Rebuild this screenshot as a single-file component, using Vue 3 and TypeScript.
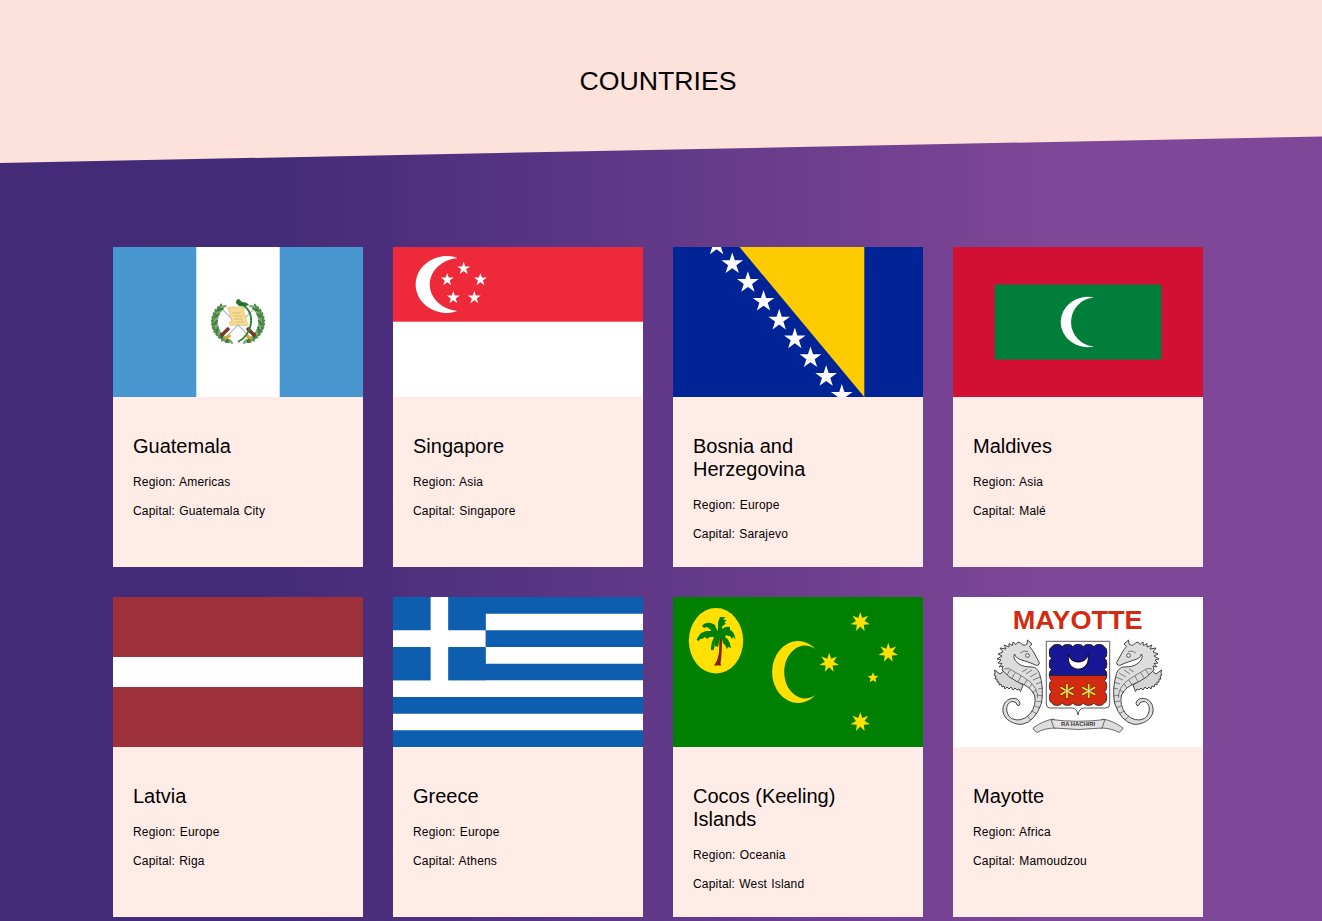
<script setup lang="ts">
interface Country {
  name: string
  region: string
  capital: string
  flag: string
}

const countries: Country[] = [
  { name: 'Guatemala', region: 'Americas', capital: 'Guatemala City', flag: 'gt' },
  { name: 'Singapore', region: 'Asia', capital: 'Singapore', flag: 'sg' },
  { name: 'Bosnia and Herzegovina', region: 'Europe', capital: 'Sarajevo', flag: 'ba' },
  { name: 'Maldives', region: 'Asia', capital: 'Malé', flag: 'mv' },
  { name: 'Latvia', region: 'Europe', capital: 'Riga', flag: 'lv' },
  { name: 'Greece', region: 'Europe', capital: 'Athens', flag: 'gr' },
  { name: 'Cocos (Keeling) Islands', region: 'Oceania', capital: 'West Island', flag: 'cc' },
  { name: 'Mayotte', region: 'Africa', capital: 'Mamoudzou', flag: 'yt' },
]

function star(cx: number, cy: number, r: number, points = 5, ratio = 0.382): string {
  const out: string[] = []
  for (let i = 0; i < points * 2; i++) {
    const rad = i % 2 ? r * ratio : r
    const a = (Math.PI * i) / points - Math.PI / 2
    out.push(`${(cx + rad * Math.cos(a)).toFixed(2)},${(cy + rad * Math.sin(a)).toFixed(2)}`)
  }
  return out.join(' ')
}

const sgStars = [[70.7, 21.5], [54.2, 32.7], [87.4, 32.7], [60.3, 50.7], [81.3, 50.7]]
const baStars = Array.from({ length: 9 }, (_, i) => [43.6 + i * 15.65, -2 + i * 18.8])
const ccStars = [[187.3, 25, 10], [215.3, 55.7, 10], [156.2, 65.7, 10], [187.3, 125, 10]]

// Laurel leaves, left branch; the right branch mirrors it
interface Leaf { x: number; y: number; a: number; c: string }
const leaves: Leaf[] = []
for (let i = 0; i < 13; i++) {
  const deg = 112 + i * 9.6
  const t = (deg * Math.PI) / 180
  const x = 125 + 23.5 * Math.cos(t)
  const y = 75 + 21 * Math.sin(t)
  leaves.push({ x: x - 1.5, y, a: deg + 60, c: '#4d8c46' })
  leaves.push({ x: x + 1.5, y, a: deg + 120, c: i % 2 ? '#3b7a35' : '#79a873' })
}

// Wavy outline of the Mayotte shield field
const top = 'M98.8 50' + 'a5.4 3.2 0 0 1 10.5 0'.repeat(5)
const scallops = top + 'a3 5.7 0 0 1 0 11.2'.repeat(5) + 'a5.4 3.2 0 0 1 -10.5 0'.repeat(5) + 'a3 5.7 0 0 1 0 -11.2'.repeat(5) + 'z'
const upperField = top + 'a3 5.7 0 0 1 0 11.2'.repeat(2) + 'q2.6 2.4 2.6 6.1H96.2q0-3.7 2.6-6.1' + 'a3 5.7 0 0 1 0 -11.2'.repeat(2) + 'z'
</script>

<template>
  <main class="page">
    <header class="hero">
      <svg class="slope" viewBox="0 0 1322 164" preserveAspectRatio="none" aria-hidden="true">
        <path d="M0 0H1322V136.5L0 163Z" fill="#fde2db" />
      </svg>
      <h1>COUNTRIES</h1>
    </header>
    <section class="grid">
      <article v-for="c in countries" :key="c.flag" class="card">
        <svg class="flag" viewBox="0 0 250 150" aria-hidden="true">
          <template v-if="c.flag === 'gt'">
            <rect width="250" height="150" fill="#4997d0" />
            <rect x="83.3" width="83.4" height="150" fill="#fff" />
            <path d="M107 60L142 95M143 60L108 95" stroke="#b4b8bc" stroke-width="1.1" />
            <g>
              <ellipse v-for="(l, i) in leaves" :key="i" rx="3.3" ry="1.3" :fill="l.c"
                :transform="`translate(${l.x} ${l.y}) rotate(${l.a})`" />
              <ellipse v-for="(l, i) in leaves" :key="'r' + i" rx="3.3" ry="1.3" :fill="l.c"
                :transform="`translate(${250 - l.x} ${l.y}) rotate(${-l.a})`" />
            </g>
            <path d="M108 89l8-8M142 89l-8-8" stroke="#7a3528" stroke-width="3.4" />
            <path d="M112 91q3 0 5-3M138 91q-3 0-5-3" fill="none" stroke="#e2a126" stroke-width="3" />
            <path d="M125 56C135 59 139 67 138 76C137 84 132 91 125 95" fill="none" stroke="#2f8736" stroke-width="2" />
            <path d="M123 56q0-4 3-4l3 3q5 0 7 3q-6 2-10 1z" fill="#25742d" />
            <path d="M114.5 60.5q8-1 15.5 0q2 1 .5 3l3.5 11.5q1.500 4-1 4q-8-2-15.500-.500q-2-1-1-3.500l2.500-.500-2.800-10z" fill="#f4dc94" stroke="#d8b665" stroke-width=".6" />
            <path d="M119 66h9M121 69h8M121 72h9M123 75h8" stroke="#c9a75b" stroke-width=".6" />
          </template>

          <template v-else-if="c.flag === 'sg'">
            <rect width="250" height="150" fill="#fff" />
            <rect width="250" height="74.7" fill="#ee2939" />
            <path d="M64.5 10.9A31 28.400 0 1 0 64.5 64.100A31.700 26.800 0 0 1 64.5 10.900Z" fill="#fff" />
            <polygon v-for="(s, i) in sgStars" :key="i" :points="star(s[0], s[1], 6.8)" fill="#fff" />
          </template>

          <template v-else-if="c.flag === 'ba'">
            <rect width="250" height="150" fill="#002395" />
            <path d="M66.5 0H191.3V150Z" fill="#fecb00" />
            <polygon v-for="(s, i) in baStars" :key="i" :points="star(s[0], s[1], 11.4)" fill="#fff" />
          </template>

          <template v-else-if="c.flag === 'mv'">
            <rect width="250" height="150" fill="#d21034" />
            <rect x="41.7" y="37.5" width="166.7" height="75" fill="#007e3a" />
            <path d="M141 50.5A27 25.200 0 1 0 141 99.500A24.550 24.550 0 0 1 141 50.500Z" fill="#fff" />
          </template>

          <template v-else-if="c.flag === 'lv'">
            <rect width="250" height="150" fill="#9e3039" />
            <rect y="60" width="250" height="30" fill="#fff" />
          </template>

          <template v-else-if="c.flag === 'gr'">
            <rect width="250" height="150" fill="#0d5eaf" />
            <path d="M92.6 25H250M92.6 58.33H250M0 91.67H250M0 125H250" stroke="#fff" stroke-width="16.67" />
            <path d="M46.4 0V84M0 41.67H92.6" stroke="#fff" stroke-width="18" />
            <path d="M0 0H37.4V33.3H0ZM55.4 0H92.6V33.3H55.4ZM0 50H37.4V83.3H0ZM55.4 50H92.6V83.3H55.4Z" fill="#0d5eaf" />
          </template>

          <template v-else-if="c.flag === 'cc'">
            <rect width="250" height="150" fill="#008000" />
            <ellipse cx="43" cy="43.8" rx="27.2" ry="32.7" fill="#ffe000" />
            <path d="M46.5 41h2.5q0 16-1.500 25.500l.7 2h-7.200q4.500-6 5-14z" fill="#802000" />
            <path d="M45 34L45 30 45 25 47 20 50 20 52.5 20 50 22.5 53.5 23 51.5 25.5 53 26.5 49 29.5 49.5 32Q52 29 57 30L57 33Q61 34 62.500 42L60 40 59 42 57 39 55 39 53 38 52 40Q57 43 58 51L55 50 54 52 52 48 50 46 49 42 47 41 46 45 45 50 42 49 42 45 41.500 50 40.500 53 38 53 38 50 39 45 41 40 37 40 34 42 32 40 29 42 27 42 26 44 23.500 43 25 40 28 36 33 34 38 34 38 33 34 30 31 31 29 29Q32 25 38 26L42 28 43 31Z" fill="#008000" />
            <path d="M142.5 52A26 31 0 1 0 142.5 98A21 26.4 0 1 1 142.5 52Z" fill="#ffe000" />
            <polygon v-for="(s, i) in ccStars" :key="i" :points="star(s[0], s[1], s[2], 7, 0.445)" fill="#ffe000" />
            <polygon :points="star(200, 80.8, 5.6, 5, 0.45)" fill="#ffe000" />
          </template>

          <template v-else>
            <rect width="250" height="150" fill="#fff" />
            <text x="124.7" y="31.5" text-anchor="middle" class="mayotte" textLength="130" lengthAdjust="spacingAndGlyphs">MAYOTTE</text>
            <path d="M93.3 44.3H156.7V107q0 4-4 4H131q-5 0-6 7q-1-7-6-7H97.3q-4 0-4-4Z" fill="#fff" stroke="#333" stroke-width=".8" />
            <path :d="scallops" fill="#d22b11" stroke="#222" stroke-width=".8" />
            <path :d="upperField" fill="#171796" stroke="#222" stroke-width=".8" />
            <path d="M115.5 57.5C112.5 77 138 77 135.2 57.5C133 67.500 117.500 67.500 115.500 57.500Z" fill="#fff" stroke="#000" stroke-width=".9" />
            <g v-for="x in [114, 135.7]" :key="x" :transform="`translate(${x} 94)`">
              <path d="M0-7.5V7.5M-7-4L7 4M-7 4L7-4" stroke="#5c2b00" stroke-width="2.8" />
              <path d="M0-7V7M-6.6-3.8L6.6 3.8M-6.6 3.8L6.6-3.8" stroke="#ffe225" stroke-width="1.8" />
              <circle r="1.6" fill="#eee" stroke="#555" stroke-width=".4" />
            </g>
            <g v-for="side in [1, -1]" :key="side" :transform="side === 1 ? undefined : 'translate(250 0) scale(-1 1)'">
              <path d="M51 74L47 77 41.5 73 42 76 41 78 43 79 42 82 44 82 44 85 46 85 46 88 48 87 49 90 51 89 52 92 54 90 56 92 58 90 60 93 62 91 64 93 66 92 67.5 94.5 70 88Z" fill="#d5d5d5" stroke="#333" stroke-width=".9" stroke-linejoin="round" />
              <path d="M74.5 43L74 47Q71 50 67.5 46L65 45 63 47.5 60 45 59.5 48.5 56 46.5 56 50 51 48 53 52 47 51 50 55 45 57 49 59 44 62 48 63 45 66 49 66.5 46 70 50 69 49 73Q56 81 65.5 85.5Q77 89 81.5 98Q84 108 77 117Q68 126 58.5 121.5C51 116 53 104 60 104.5Q64 105 64 108Q66.5 110 67 106.5C66 99 54 100 51 107.5C46 120 59 128 69 127.3Q82 125 88.5 106Q91 91 86.5 76.5Q84 70 79 70Q70 70 66 67Q59 62 61.5 57Q63 62 70 63.3L79 66.5 83.5 68.5Q87 68 86.3 65.5L80 54 76.5 49.5 79 47Z" fill="#ddd" stroke="#333" stroke-width=".9" stroke-linejoin="round" />
              <path d="M67 56Q71 53 75 54.5M51 72Q56 70 60 74Q68 78 76 84Q85 91 84.5 101M57 73l-3 5M62 76l-3 5M68 79l-3 6M74 83l-3 5M79 87l-3 4M83 93l-4 3M69 75l5-3M73 77l6-4M77 80l7-4M80 83l7-3M83 87l6-2M85 92l5-1M84 98l6 1M83 104l6 1M82 109l5 2M79 114l5 3M74 119l4 4" fill="none" stroke="#444" stroke-width=".65" />
              <circle cx="74.5" cy="58.5" r="1.9" fill="#eee" stroke="#333" stroke-width=".8" />
            </g>
            <path d="M80 131Q91 123 101 122L103 131Q92 131 84 135.5L81 133Z M170 131Q159 123 149 122L147 131Q158 131 166 135.5L169 133Z" fill="#ddd" stroke="#333" stroke-width=".7" />
            <path d="M98 122.5Q125 126 152 122.5L149 131Q125 134 101 131Z" fill="#e2e2e2" stroke="#333" stroke-width=".7" />
            <text x="125" y="128.700" text-anchor="middle" class="motto" textLength="34" lengthAdjust="spacingAndGlyphs">RA HACHIRI</text>
          </template>
        </svg>
        <div class="info">
          <h2>{{ c.name }}</h2>
          <p>Region: {{ c.region }}</p>
          <p>Capital: {{ c.capital }}</p>
        </div>
      </article>
    </section>
  </main>
</template>

<style>
body {
  margin: 0;
  overflow: hidden;
}
</style>

<style scoped>
.page {
  height: 921px;
  overflow: hidden;
  background: linear-gradient(to right, #432b77 0%, #432b77 20%, #7f4798 80%, #7f4798 100%);
  font-family: "Liberation Sans", Arial, sans-serif;
  color: #000;
}
.hero {
  position: relative;
  height: 164px;
  box-sizing: border-box;
  padding: 65px 6px 0 0;
  text-align: center;
}
.slope {
  position: absolute;
  left: 0;
  top: 0;
  width: 100%;
  height: 164px;
}
h1 {
  position: relative;
  margin: 0;
  font-size: 26.7px;
  font-weight: 400;
  line-height: 32px;
}
.grid {
  display: grid;
  grid-template-columns: repeat(4, 250px);
  grid-auto-rows: 320px;
  gap: 30px;
  padding: 83px 0 0 113px;
}
.card {
  background: #ffece7;
}
.flag {
  display: block;
  width: 250px;
  height: 150px;
}
.info {
  padding: 38px 20px 0;
}
h2 {
  margin: 0 0 17px;
  font-size: 20px;
  font-weight: 400;
  line-height: 23px;
}
p {
  margin: 0 0 14px;
  font-size: 12px;
  line-height: 15px;
  letter-spacing: 0.18px;
  word-spacing: 0.6px;
}
.mayotte {
  font: 700 25px "Liberation Sans", Arial, sans-serif;
  fill: #d22b11;
}
.motto {
  font: 700 5.5px "Liberation Sans", Arial, sans-serif;
  fill: #333;
}
</style>
